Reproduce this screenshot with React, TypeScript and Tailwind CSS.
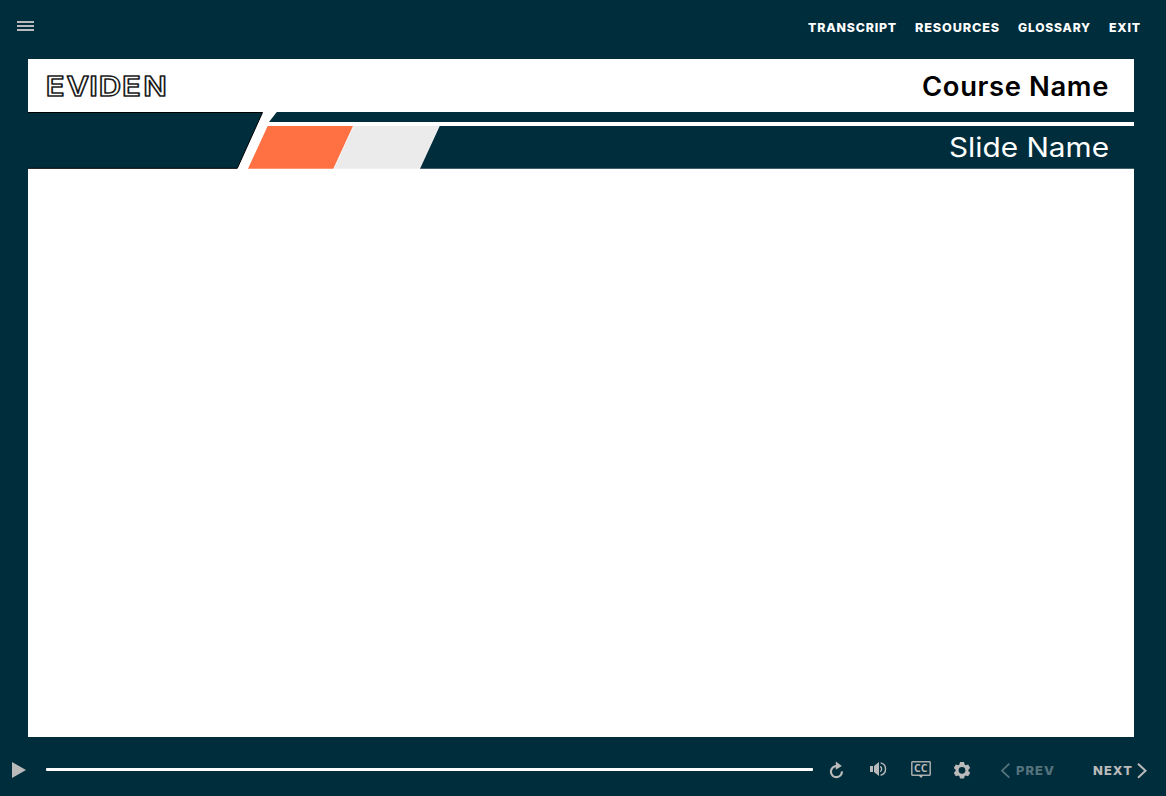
import React from "react";

const links = [
  { label: "TRANSCRIPT", width: 89 },
  { label: "RESOURCES", width: 85 },
  { label: "GLOSSARY", width: 73 },
  { label: "EXIT", width: 32 },
];

type FittedProps = {
  text: string;
  width: number;
  height: number;
  baseline: number;
  className: string;
};

function Fitted({ text, width, height, baseline, className }: FittedProps) {
  return (
    <svg width={width} height={height} className="block shrink-0 overflow-visible">
      <text
        x="0"
        y={baseline}
        textLength={width}
        lengthAdjust="spacingAndGlyphs"
        className={className}
      >
        {text}
      </text>
    </svg>
  );
}

function Logo() {
  return (
    <svg width="122" height="24" className="block overflow-visible" aria-label="EVIDEN">
      <text
        x="-0.2 17.8 37.6 45.8 66 84.6"
        y="21.4"
        transform="scale(1.15 1)"
        strokeWidth="1.5"
        strokeLinejoin="round"
        className="fill-white stroke-[#1c1c1c] font-['Inter',sans-serif] text-[27px] font-semibold"
      >
        EVIDEN
      </text>
    </svg>
  );
}

function TopBar() {
  return (
    <header className="flex h-[59px] shrink-0 items-start justify-between pl-[17px] pr-[25px]">
      <button aria-label="Menu" className="mt-[21px] flex w-[17px] flex-col gap-[2px]">
        <span className="h-[2px] w-full bg-[#bababa]" />
        <span className="h-[2px] w-full bg-[#bababa]" />
        <span className="h-[2px] w-full bg-[#bababa]" />
      </button>
      <nav className="mt-[20px] flex gap-[18px]">
        {links.map((l) => (
          <a key={l.label}>
            <Fitted
              text={l.label}
              width={l.width}
              height={16}
              baseline={12}
              className="fill-white font-['Inter',sans-serif] text-[12px] font-extrabold tracking-[0.8px]"
            />
          </a>
        ))}
      </nav>
    </header>
  );
}

function Slide() {
  return (
    <main className="ml-[28px] flex h-[678px] w-[1106px] shrink-0 flex-col bg-white">
      <div className="flex h-[53px] items-start justify-between pl-[18px] pr-[25px]">
        <div className="mt-[16px]">
          <Logo />
        </div>
        <h1 className="mt-[12px]">
          <Fitted
            text="Course Name"
            width={187}
            height={32}
            baseline={25}
            className="fill-black font-['Inter',sans-serif] text-[26.5px] font-semibold tracking-[0.6px]"
          />
        </h1>
      </div>
      <div className="relative flex h-[57px] items-start justify-end pr-[25px]">
        <svg
          className="absolute inset-0"
          width="1106"
          height="57"
          viewBox="0 0 1106 57"
          aria-hidden="true"
        >
          <path d="M-1 .5H234.5L209.3 56.3H-1Z" fill="#002d3b" stroke="#000" />
          <path d="M248.8 0H1106V10H241Z" fill="#002d3b" />
          <path d="M239.7 14H325L305.3 56.7H220Z" fill="#ff7043" />
          <path d="M325.8 14H411L391.7 56.7H306Z" fill="#ebebeb" />
          <path d="M411.7 14H1106V56.7H392Z" fill="#002d3b" />
        </svg>
        <h2 className="relative mt-[19px]">
          <Fitted
            text="Slide Name"
            width={160}
            height={32}
            baseline={26}
            className="fill-white font-['Inter',sans-serif] text-[27px] font-normal"
          />
        </h2>
      </div>
    </main>
  );
}

function Controls() {
  return (
    <footer className="flex flex-1 items-start pl-[12px]">
      <button aria-label="Play" className="mt-[25px]">
        <svg width="14" height="16" className="block">
          <path d="M0 0L14 8L0 16Z" fill="#bababa" />
        </svg>
      </button>
      <div className="ml-[20px] mt-[31px] h-[3px] w-[767px] rounded-[1px] bg-white" />
      <button aria-label="Replay" className="ml-[16px] mt-[25px]">
        <svg width="16" height="17" className="block overflow-visible">
          <path d="M7.5 4.2A5.5 5.5 0 1 0 12.9 9.3" fill="none" stroke="#bababa" strokeWidth="2.2" />
          <path d="M6.8 -.6L12.8 4L6.8 7.8Z" fill="#bababa" />
        </svg>
      </button>
      <button aria-label="Volume" className="ml-[25px] mt-[25px]">
        <svg width="17" height="15" className="block">
          <path d="M0 4H3V10H0ZM4 4L9 0V14L4 10Z" fill="#bababa" />
          <path
            d="M10.3 4.4A3.4 3.4 0 0 1 10.3 9.8M10.6 .9A6.3 6.3 0 0 1 10.6 13.2"
            fill="none"
            stroke="#bababa"
            strokeWidth="1.4"
          />
        </svg>
      </button>
      <button aria-label="Captions" className="ml-[23.5px] mt-[24px]">
        <svg width="20" height="17" className="block">
          <path d="M1.5 .8H18.5Q19.2 .8 19.2 1.5V13.5Q19.2 14.2 18.5 14.2H1.5Q.8 14.2 .8 13.5V1.5Q.8 .8 1.5 .8Z" fill="none" stroke="#a8acad" strokeWidth="1.5" />
          <path d="M7.3 14H12.7L10 17Z" fill="#bababa" />
          <text
            x="3"
            y="11.3"
            textLength="13.5"
            lengthAdjust="spacingAndGlyphs"
            className="fill-[#bababa] font-['Open_Sans',sans-serif] text-[10px] font-bold"
          >
            CC
          </text>
        </svg>
      </button>
      <button aria-label="Settings" className="ml-[22.5px] mt-[25px]">
        <svg width="18" height="17" viewBox="0 0 18 17" className="block">
          <circle cx="9" cy="8.3" r="4.9" fill="none" stroke="#bababa" strokeWidth="3" />
          {[0, 60, 120, 180, 240, 300].map((a) => (
            <path
              key={a}
              d="M7 0H11L11.8 3.3H6.2Z"
              fill="#bababa"
              transform={`rotate(${a} 9 8.3)`}
            />
          ))}
        </svg>
      </button>
      <button className="ml-[30px] mt-[26px] flex opacity-40">
        <svg width="9" height="16" className="block">
          <path d="M8.3 .7L1 7.7L8.3 14.7" fill="none" stroke="#d5dbdd" strokeWidth="1.8" />
        </svg>
        <span className="ml-[6px]">
          <Fitted
            text="PREV"
            width={39}
            height={16}
            baseline={12}
            className="fill-[#d5dbdd] font-['Inter',sans-serif] text-[12px] font-extrabold tracking-[1px]"
          />
        </span>
      </button>
      <button className="ml-[38px] mt-[26px] flex">
        <Fitted
          text="NEXT"
          width={40}
          height={16}
          baseline={12}
          className="fill-[#bababa] font-['Inter',sans-serif] text-[12px] font-extrabold tracking-[1px]"
        />
        <svg width="10" height="16" className="ml-[4px] block">
          <path d="M1 .7L8.5 7.7L1 14.7" fill="none" stroke="#bababa" strokeWidth="2" />
        </svg>
      </button>
    </footer>
  );
}

export default function App() {
  return (
    <div className="flex h-[796px] w-[1166px] flex-col overflow-hidden bg-[#002d3b]">
      <TopBar />
      <Slide />
      <Controls />
    </div>
  );
}
